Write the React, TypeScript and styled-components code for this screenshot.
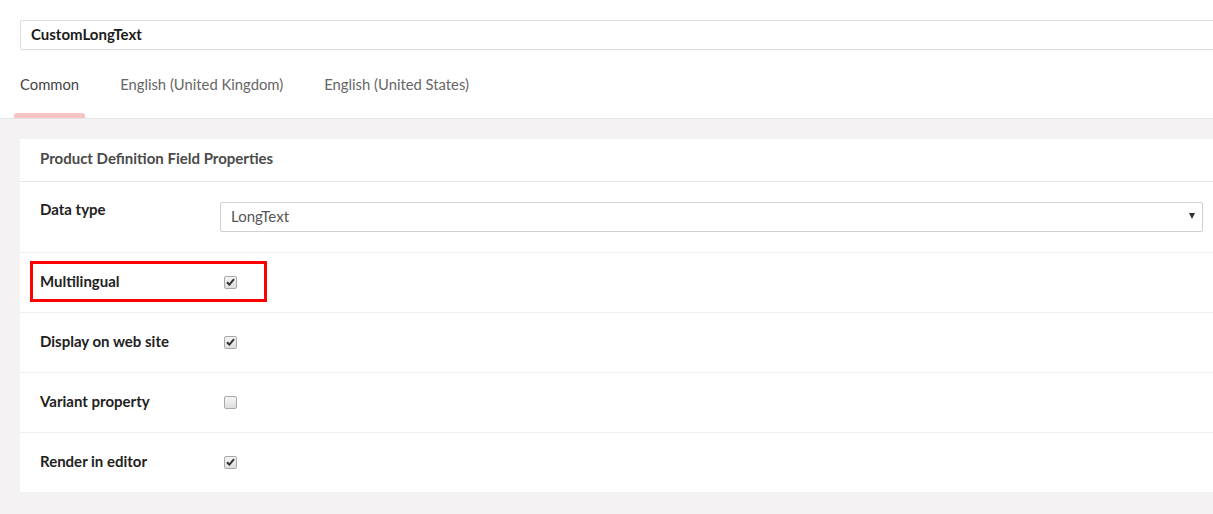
import React from "react";
import styled, { createGlobalStyle } from "styled-components";

const Global = createGlobalStyle`
  html, body { margin: 0; padding: 0; background: #f4f2f2; overflow: hidden; }
  body { font-family: Lato, "Open Sans", sans-serif; }
  * { box-sizing: border-box; }
`;

const Page = styled.div`
  width: 1243px;
  min-height: 514px;
  background: #f4f2f2;
`;

const Top = styled.div`
  background: #fff;
  border-bottom: 1px solid #e6e4e4;
  padding: 20px 20px 0 20px;
`;

const NameInput = styled.div`
  height: 30px;
  border: 1px solid #dcdcdc;
  border-radius: 2px;
  display: flex;
  align-items: center;
  padding: 0 10px 3px 10px;
  font-size: 15px;
  font-weight: 700;
  color: #1b1b1b;
`;

const Tabs = styled.div`
  display: flex;
  gap: 29px;
  margin-left: -6px;
  height: 68px;
`;

const Tab = styled.div<{ $active?: boolean }>`
  position: relative;
  padding: 0 6px;
  display: flex;
  align-items: center;
  font-size: 14.8px;
  color: ${(p) => (p.$active ? "#444" : "#666")};
  &::after {
    content: "";
    position: absolute;
    left: 0;
    right: 0;
    bottom: 0;
    height: 5px;
    border-radius: 3px 3px 0 0;
    background: ${(p) => (p.$active ? "#f6c4c2" : "transparent")};
  }
`;

const Body = styled.div`
  padding: 20px 20px 22px 20px;
`;

const Card = styled.div`
  background: #fff;
`;

const CardHeader = styled.div`
  height: 43px;
  display: flex;
  align-items: center;
  padding: 0 20px 5px 20px;
  font-size: 15px;
  font-weight: 700;
  color: #4a4a4a;
  border-bottom: 1px solid #e8e8e8;
`;

const Row = styled.div<{ $tall?: boolean }>`
  position: relative;
  display: grid;
  grid-template-columns: 180px 1fr;
  align-items: ${(p) => (p.$tall ? "start" : "center")};
  height: ${(p) => (p.$tall ? "70px" : "60px")};
  padding: ${(p) => (p.$tall ? "20px 20px 0 20px" : "0 20px")};
  & + & {
    border-top: 1px solid #efefef;
  }
`;

const Label = styled.div<{ $tall?: boolean }>`
  font-size: 15px;
  font-weight: 700;
  color: #222;
  line-height: ${(p) => (p.$tall ? "16px" : "normal")};
  margin-top: ${(p) => (p.$tall ? "-1px" : "-4px")};
`;

const Select = styled.div`
  height: 30px;
  border: 1px solid #cfcfcf;
  border-radius: 2px;
  display: flex;
  align-items: center;
  justify-content: space-between;
  padding: 0 7px 2px 10px;
  font-size: 15px;
  color: #555;
`;

const Arrow = styled.span`
  width: 0;
  height: 0;
  border-left: 3.5px solid transparent;
  border-right: 3.5px solid transparent;
  border-top: 6px solid #333;
`;

const Box = styled.span`
  margin-left: 4px;
  margin-top: -1px;
  width: 13px;
  height: 13px;
  border: 1px solid #a9a9a9;
  border-radius: 2px;
  background: linear-gradient(#f4f4f4, #dedede);
  display: flex;
  align-items: center;
  justify-content: center;
`;

const Highlight = styled.div`
  position: absolute;
  left: 10px;
  top: 8px;
  width: 237px;
  height: 41px;
  border: 3px solid #ff0000;
  pointer-events: none;
`;

const Check = () => (
  <svg width="9" height="8" viewBox="0 0 9 8">
    <path d="M1 4.2 L3.4 6.6 L8 1.2" fill="none" stroke="#333" strokeWidth="2" />
  </svg>
);

const CheckRow = ({ label, checked, highlight }: { label: string; checked: boolean; highlight?: boolean }) => (
  <Row>
    <Label>{label}</Label>
    <div>
      <Box>{checked && <Check />}</Box>
    </div>
    {highlight && <Highlight />}
  </Row>
);

export default function App() {
  return (
    <Page>
      <Global />
      <Top>
        <NameInput>CustomLongText</NameInput>
        <Tabs>
          <Tab $active>Common</Tab>
          <Tab>English (United Kingdom)</Tab>
          <Tab>English (United States)</Tab>
        </Tabs>
      </Top>
      <Body>
        <Card>
          <CardHeader>Product Definition Field Properties</CardHeader>
          <Row $tall>
            <Label $tall>Data type</Label>
            <Select>
              LongText
              <Arrow />
            </Select>
          </Row>
          <CheckRow label="Multilingual" checked highlight />
          <CheckRow label="Display on web site" checked />
          <CheckRow label="Variant property" checked={false} />
          <CheckRow label="Render in editor" checked />
        </Card>
      </Body>
    </Page>
  );
}
